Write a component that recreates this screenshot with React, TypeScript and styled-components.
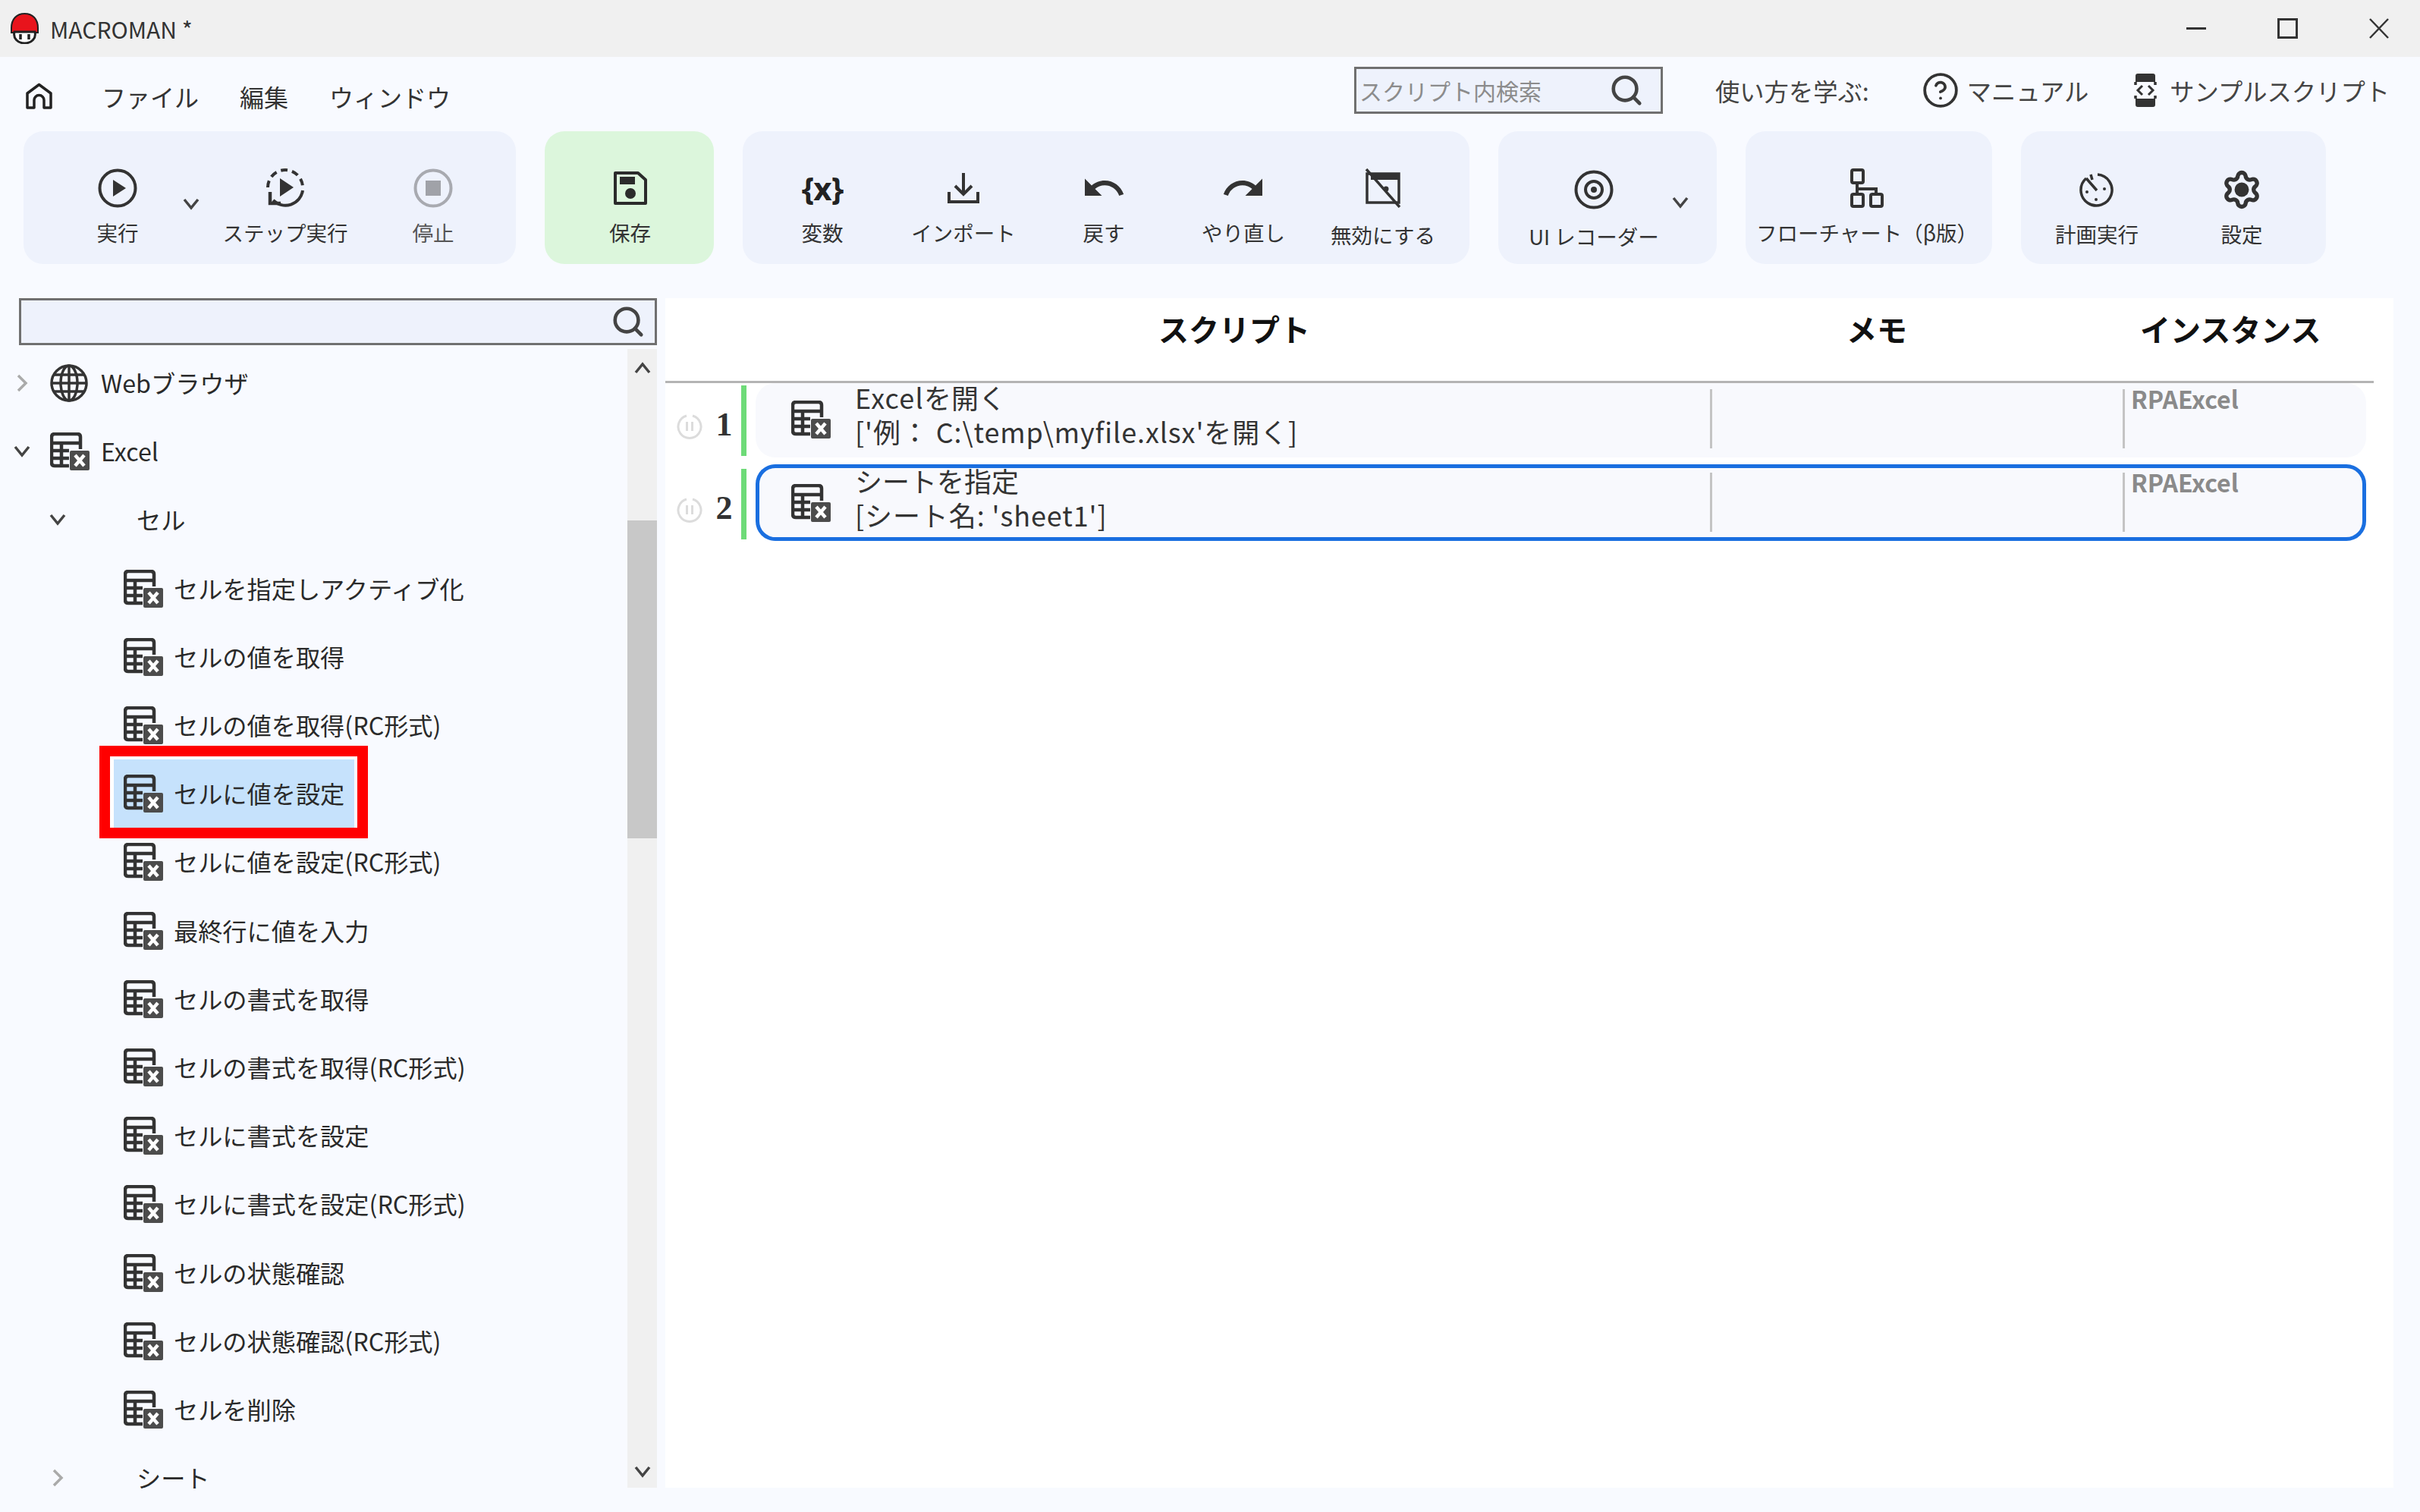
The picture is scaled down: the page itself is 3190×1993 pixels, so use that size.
import React from 'react';
import styled, { createGlobalStyle } from 'styled-components';
import { CircleHelp, Search, Settings } from 'lucide-react';
import { MdRedo, MdUndo } from 'react-icons/md';

const FONT = '"Noto Sans CJK JP", "Noto Sans", sans-serif';
const INK = '#333';

const GlobalStyle = createGlobalStyle`
  html, body {
    margin: 0;
    width: 3190px;
    height: 1993px;
    overflow: hidden;
    background: #f8faff;
  }
  * { box-sizing: border-box; }
`;

const ExcelIcon = () => (
  <svg width="52" height="50" viewBox="0 0 52 50" fill="none">
    <path d="M25 44 H6 Q2 44 2 40 V6 Q2 2 6 2 H36 Q40 2 40 6 V22" stroke={INK} strokeWidth="4.5" />
    <path d="M2 14 H40 M2 24 H25 M2 34 H25 M15 14 V44" stroke={INK} strokeWidth="4.5" />
    <rect x="26" y="24" width="26" height="26" rx="2" fill="#4c4c4c" />
    <path d="M33 30 L45 44 M45 30 L33 44" stroke="#fff" strokeWidth="4.5" />
  </svg>
);

const GlobeIcon = () => (
  <svg width="50" height="50" viewBox="0 0 50 50" fill="none" stroke={INK} strokeWidth="3.5">
    <circle cx="25" cy="25" r="23" />
    <ellipse cx="25" cy="25" rx="11" ry="23" />
    <path d="M25 2 V48 M2 25 H48 M5 14 H45 M5 36 H45" />
  </svg>
);

const HomeIcon = () => (
  <svg width="37" height="36" viewBox="0 0 37 36" fill="none" stroke="#222" strokeWidth="3.5" strokeLinejoin="round">
    <path d="M3 33 V14 L18.5 2.5 L34 14 V33 H25 V23 a6.5 6.5 0 0 0 -13 0 V33 Z" />
  </svg>
);

const RunIcon = () => (
  <svg width="52" height="52" viewBox="0 0 52 52" fill="none">
    <circle cx="26" cy="26" r="23.5" stroke={INK} strokeWidth="4" />
    <path d="M20 15 L37 26 L20 37 Z" fill={INK} />
  </svg>
);

const StepIcon = () => (
  <svg width="56" height="56" viewBox="0 0 56 56" fill="none" stroke={INK} strokeWidth="4">
    <path d="M5 27 A23 23 0 0 1 51 27" strokeDasharray="9 6" />
    <path d="M51 31 A23 23 0 0 1 12 44" />
    <path d="M8 33 L8 48 L22 48" strokeWidth="4.5" />
    <path d="M21 15 L39 27 L21 39 Z" fill={INK} stroke="none" />
  </svg>
);

const StopIcon = () => (
  <svg width="52" height="52" viewBox="0 0 52 52" fill="none">
    <circle cx="26" cy="26" r="23.5" stroke="#a8aab0" strokeWidth="4" />
    <rect x="16" y="16" width="20" height="20" fill="#a0a2a8" />
  </svg>
);

const SaveIcon = () => (
  <svg width="46" height="46" viewBox="0 0 46 46" fill="none">
    <path d="M3 3 H33 L43 12 V43 H3 Z" stroke="#2b2b2b" strokeWidth="4" strokeLinejoin="round" />
    <rect x="9" y="8" width="20" height="10" fill="#2b2b2b" />
    <circle cx="23" cy="30" r="7" fill="#2b2b2b" />
  </svg>
);

const ImportIcon = () => (
  <svg width="42" height="42" viewBox="0 0 42 42" fill="none" stroke={INK} strokeWidth="4">
    <path d="M21 1 V28 M10 18 L21 29 L32 18" />
    <path d="M2 26 V39 H40 V26" />
  </svg>
);

const DisableIcon = () => (
  <svg width="52" height="52" viewBox="0 0 52 52" fill="none">
    <rect x="5" y="7" width="42" height="38" stroke={INK} strokeWidth="3.5" />
    <rect x="10" y="7" width="37" height="8" fill={INK} />
    <circle cx="30" cy="27" r="3.5" fill={INK} />
    <path d="M4 1 L48 51" stroke={INK} strokeWidth="3.5" />
  </svg>
);

const RecordIcon = () => (
  <svg width="52" height="52" viewBox="0 0 52 52" fill="none" stroke={INK} strokeWidth="4">
    <circle cx="26" cy="26" r="23.5" />
    <circle cx="26" cy="26" r="11" />
    <circle cx="26" cy="26" r="4" fill={INK} stroke="none" />
  </svg>
);

const FlowIcon = () => (
  <svg width="48" height="52" viewBox="0 0 48 52" fill="none" stroke={INK} strokeWidth="4">
    <rect x="4" y="2" width="15" height="17" rx="2" />
    <rect x="4" y="34" width="15" height="16" rx="2" />
    <rect x="29" y="34" width="15" height="16" rx="2" />
    <path d="M11 19 V34 M11 27 H36 V34" />
  </svg>
);

const ScheduleIcon = () => (
  <svg width="46" height="46" viewBox="0 0 46 46" fill="none" stroke={INK} strokeWidth="3.5">
    <path d="M24 3 A20.5 20.5 0 1 1 9 8" />
    <path d="M9 8 L23 24 M15 3 L17 10" />
    <circle cx="33" cy="22" r="2" fill={INK} stroke="none" />
    <circle cx="10" cy="26" r="2" fill={INK} stroke="none" />
    <circle cx="22" cy="36" r="2" fill={INK} stroke="none" />
  </svg>
);

const SampleIcon = () => (
  <svg width="30" height="46" viewBox="0 0 30 46" fill="none">
    <path d="M2 12 V4 Q2 1 5 1 H25 Q28 1 28 4 V12 Z" fill={INK} />
    <path d="M2 34 V42 Q2 45 5 45 H25 Q28 45 28 42 V34 Z" fill={INK} />
    <path d="M2 12 V16 M28 12 V16 M2 30 V34 M28 30 V34" stroke={INK} strokeWidth="3.5" />
    <path d="M11 17 L5 23 L11 29 M19 17 L25 23 L19 29" stroke={INK} strokeWidth="3" />
  </svg>
);

const PauseIcon = () => (
  <svg width="34" height="34" viewBox="0 0 34 34" fill="none" stroke="#dcdcdc" strokeWidth="3">
    <path d="M13 3 A15 15 0 1 0 21 3" />
    <path d="M13.5 11 V23 M20.5 11 V23" />
  </svg>
);

const Logo = () => (
  <svg width="39" height="41" viewBox="0 0 39 41">
    <path d="M2 20 C2 8 9 1 19.5 1 C30 1 37 8 37 20 V26 H2 Z" fill="#e8141c" stroke="#222" strokeWidth="2" />
    <path d="M6 25 H33 C35 33 29 40 19.5 40 C10 40 4 33 6 25 Z" fill="#fff" stroke="#222" strokeWidth="3" />
    <path d="M14 28 V35 M25 28 V35" stroke="#222" strokeWidth="3.5" />
  </svg>
);

const Caret = ({ dir, muted }: { dir: 'up' | 'down' | 'right'; muted?: boolean }) => {
  const color = muted ? '#aaa' : '#444';
  if (dir === 'right') {
    return (
      <svg width="16" height="24" viewBox="0 0 16 24" fill="none" stroke={color} strokeWidth="3.5">
        <path d="M3 2 L13 12 L3 22" />
      </svg>
    );
  }
  return (
    <svg width="22" height="16" viewBox="0 0 22 16" fill="none" stroke={color} strokeWidth="3.5">
      <path d={dir === 'down' ? 'M2 2 L11 13 L20 2' : 'M2 14 L11 3 L20 14'} />
    </svg>
  );
};

const TitleBar = styled.header`
  height: 75px;
  background: #f0f0f0;
  display: flex;
  align-items: center;
  padding-left: 13px;
`;

const AppTitle = styled.span`
  margin-left: 14px;
  font: 30px ${FONT};
  color: #333;
`;

const WindowButtons = styled.div`
  margin-left: auto;
  display: flex;
  align-items: center;
  padding-right: 41px;
  gap: 94px;
`;

const MenuRow = styled.div`
  height: 98px;
  display: flex;
  padding: 13px 40px 0 33px;
`;

const MenuLeft = styled.nav`
  display: flex;
  align-items: center;
  height: 78px;
`;

const MenuItem = styled.span<{ $gap: number }>`
  margin-left: ${p => p.$gap}px;
  font: 32px ${FONT};
  color: #333;
`;

const MenuRight = styled.div`
  margin-left: auto;
  display: flex;
  align-items: center;
  height: 62px;
`;

const SearchBox = styled.div<{ $width: number; $pad: number }>`
  width: ${p => p.$width}px;
  height: 62px;
  flex: none;
  border: 3px solid #707070;
  background: #eef2fc;
  display: flex;
  align-items: center;
  justify-content: space-between;
  padding: 0 ${p => p.$pad}px 0 4px;
  font: 30px ${FONT};
  color: #8c8c8c;
`;

const LearnLabel = styled.span`
  margin-left: 69px;
  font: 32.3px ${FONT};
  color: #444;
`;

const HelpLink = styled.span<{ $gap: number; $inner: number }>`
  display: flex;
  align-items: center;
  gap: ${p => p.$inner}px;
  margin-left: ${p => p.$gap}px;
  font: 32.3px ${FONT};
  color: #444;
`;

const Toolbar = styled.div`
  display: flex;
  gap: 38px;
  padding-left: 31px;
  height: 175px;
`;

const Group = styled.div<{ $width: number; $inset?: number; $save?: boolean }>`
  width: ${p => p.$width}px;
  height: 175px;
  flex: none;
  display: flex;
  padding-left: ${p => p.$inset ?? 0}px;
  padding-top: 47px;
  border-radius: 26px;
  background: ${p => (p.$save ? '#dcf6dc' : '#eef2fc')};
`;

const Tool = styled.div<{ $width: number; $lowered?: boolean }>`
  width: ${p => p.$width}px;
  flex: none;
  display: flex;
  flex-direction: column;
  align-items: center;
  padding-top: ${p => (p.$lowered ? 2 : 0)}px;
`;

const ToolIcon = styled.div`
  height: 56px;
  display: flex;
  align-items: center;
  justify-content: center;
  color: ${INK};
`;

const ToolLabel = styled.span<{ $drop?: number; $muted?: boolean }>`
  margin-top: ${p => 10 + (p.$drop ?? 0)}px;
  font: 27.5px/40px ${FONT};
  color: ${p => (p.$muted ? '#555' : '#333')};
  white-space: nowrap;
`;

const VarGlyph = styled.span`
  font: 700 42px/50px "Noto Sans", sans-serif;
  letter-spacing: -1px;
  color: #222;
`;

const GearIcon = styled(Settings)`
  color: ${INK};
  circle { fill: ${INK}; }
`;

const ToolCaret = styled.div<{ $width: number; $top: number }>`
  width: ${p => p.$width}px;
  flex: none;
  display: flex;
  justify-content: center;
  padding-top: ${p => p.$top}px;
`;

const Main = styled.main`
  display: flex;
  margin-top: 45px;
  height: 1568px;
`;

const Sidebar = styled.aside`
  width: 877px;
  flex: none;
  padding: 0 11px 0 25px;
`;

const TreeArea = styled.div`
  display: flex;
  height: 1501px;
  margin: 5px 0 0 -25px;
`;

const Tree = styled.ul`
  flex: 1;
  margin: 0;
  padding: 0;
  list-style: none;
`;

const TreeRow = styled.li<{ $level: number }>`
  height: 90.2px;
  display: flex;
  align-items: center;
  padding-left: ${p => [14, 61, 150][p.$level]}px;
  font: 32.2px ${FONT};
  color: #2a2a2a;
`;

const TreeText = styled.span`
  position: relative;
  top: -1px;
`;

const CaretSlot = styled.span`
  width: 30px;
  flex: none;
  display: flex;
  justify-content: center;
`;

const NodeIcon = styled.span`
  width: 54px;
  flex: none;
  display: flex;
  margin-left: 22px;
  margin-right: 13px;
`;

const GroupName = styled.span`
  margin-left: 89px;
`;

const Leaf = styled.span<{ $selected?: boolean }>`
  position: relative;
  height: 90px;
  display: flex;
  align-items: center;
  gap: 14px;
  padding: 0 13px;
  background: ${p => (p.$selected ? '#c6e2fc' : 'transparent')};
`;

const RedFrame = styled.span`
  position: absolute;
  left: -19px;
  right: -18px;
  top: -18px;
  bottom: -14px;
  border: 14px solid #f00;
  box-shadow: inset 5px 4px 0 #fff;
  pointer-events: none;
`;

const ScrollTrack = styled.div`
  width: 39px;
  flex: none;
  background: #f0f0f0;
  display: flex;
  flex-direction: column;
  align-items: center;
`;

const ScrollArrow = styled.div`
  height: 50px;
  flex: none;
  display: flex;
  align-items: center;
  justify-content: center;
  &:last-child { padding-top: 8px; }
`;

const ScrollThumb = styled.div`
  width: 100%;
  height: 419px;
  flex: none;
  margin-top: 176px;
  margin-bottom: auto;
  background: #c8c8c8;
`;

const ScriptPanel = styled.section`
  width: 2278px;
  height: 1568px;
  flex: none;
  background: #fff;
`;

const ScriptHeader = styled.div`
  width: 2252px;
  height: 112px;
  display: grid;
  grid-template-columns: 1500px 194px 558px;
  border-bottom: 3px solid #b4b4b4;
  padding-bottom: 29px;
  align-items: center;
  text-align: center;
  font: 700 40px ${FONT};
  color: #111;
`;

const InstanceHeading = styled.span`
  justify-self: start;
  margin-left: 250px;
`;

const ScriptRow = styled.div`
  height: 100px;
  margin-bottom: 10px;
  display: flex;
  align-items: flex-start;
  padding-left: 15px;
`;

const PauseSlot = styled.div`
  width: 34px;
  flex: none;
  padding-top: 40px;
  display: flex;
`;

const LineNumber = styled.div`
  width: 51px;
  flex: none;
  padding: 0 0 0 6px;
  text-align: center;
  font: 700 44px/110px "Liberation Serif", serif;
  color: #333;
`;

const StatusBar = styled.div`
  width: 7px;
  height: 93px;
  margin-top: 3px;
  flex: none;
  background: #6edb78;
`;

const ScriptCard = styled.div<{ $selected?: boolean }>`
  width: 2123px;
  margin-left: 12px;
  flex: none;
  height: ${p => (p.$selected ? 101 : 98)}px;
  margin-top: ${p => (p.$selected ? -3 : 0)}px;
  padding-top: ${p => (p.$selected ? 3 : 0)}px;
  border-radius: 26px;
  background: #f8f9fd;
  box-shadow: ${p => (p.$selected ? 'inset 0 0 0 5px #1a6fe0' : 'none')};
  display: grid;
  grid-template-columns: 1258px 544px 1fr;
`;

const CommandCell = styled.div`
  display: flex;
  align-items: flex-start;
  padding-left: 47px;
`;

const CommandIcon = styled.div`
  margin-top: 23px;
  margin-right: 32px;
  display: flex;
`;

const CommandText = styled.div`
  margin-top: -4px;
  font: 36px/45px ${FONT};
  color: #333;
`;

const CommandTitle = styled.div``;

const CommandDetail = styled.div`
  letter-spacing: 0.9px;
`;

const LatinWord = styled.span`
  letter-spacing: 1.2px;
`;

const ColumnCell = styled.div`
  position: relative;
  padding-left: 11px;
  font: 700 32px/41px ${FONT};
  color: #8a8a8a;
  &::before {
    content: '';
    position: absolute;
    left: 0;
    top: 8px;
    width: 3px;
    height: 78px;
    background: #c4c4c4;
  }
`;

const leaves = [
  'セルを指定しアクティブ化',
  'セルの値を取得',
  'セルの値を取得(RC形式)',
  'セルに値を設定',
  'セルに値を設定(RC形式)',
  '最終行に値を入力',
  'セルの書式を取得',
  'セルの書式を取得(RC形式)',
  'セルに書式を設定',
  'セルに書式を設定(RC形式)',
  'セルの状態確認',
  'セルの状態確認(RC形式)',
  'セルを削除',
];

const commands = [
  {
    no: 1,
    title: (
      <>
        <LatinWord>Excel</LatinWord>を開く
      </>
    ),
    detail: "['例： C:\\temp\\myfile.xlsx'を開く]",
  },
  { no: 2, title: 'シートを指定', detail: "[シート名: 'sheet1']", selected: true },
];

const App = () => (
  <>
    <GlobalStyle />
    <TitleBar>
      <Logo />
      <AppTitle>MACROMAN *</AppTitle>
      <WindowButtons>
        <svg width="26" height="4" viewBox="0 0 26 4"><rect width="26" height="3" fill="#333" /></svg>
        <svg width="27" height="27" viewBox="0 0 27 27" fill="none" stroke="#333" strokeWidth="3"><rect x="1.5" y="1.5" width="24" height="24" /></svg>
        <svg width="26" height="27" viewBox="0 0 26 27" fill="none" stroke="#333" strokeWidth="2.5"><path d="M1 1 L25 26 M25 1 L1 26" /></svg>
      </WindowButtons>
    </TitleBar>

    <MenuRow>
      <MenuLeft>
        <HomeIcon />
        <MenuItem $gap={64}>ファイル</MenuItem>
        <MenuItem $gap={54}>編集</MenuItem>
        <MenuItem $gap={54}>ウィンドウ</MenuItem>
      </MenuLeft>
      <MenuRight>
        <SearchBox $width={407} $pad={22}>
          スクリプト内検索
          <Search size={46} strokeWidth={2.4} color="#444" />
        </SearchBox>
        <LearnLabel>使い方を学ぶ:</LearnLabel>
        <HelpLink $gap={69} $inner={10}>
          <CircleHelp size={50} strokeWidth={1.8} color="#333" />
          マニュアル
        </HelpLink>
        <HelpLink $gap={60} $inner={17}>
          <SampleIcon />
          サンプルスクリプト
        </HelpLink>
      </MenuRight>
    </MenuRow>

    <Toolbar>
      <Group $width={649} $inset={64}>
        <Tool $width={120}>
          <ToolIcon><RunIcon /></ToolIcon>
          <ToolLabel>実行</ToolLabel>
        </Tool>
        <ToolCaret $width={74} $top={41}><Caret dir="down" /></ToolCaret>
        <Tool $width={174}>
          <ToolIcon><StepIcon /></ToolIcon>
          <ToolLabel>ステップ実行</ToolLabel>
        </Tool>
        <Tool $width={216}>
          <ToolIcon><StopIcon /></ToolIcon>
          <ToolLabel $muted>停止</ToolLabel>
        </Tool>
      </Group>
      <Group $width={223} $save>
        <Tool $width={225}>
          <ToolIcon><SaveIcon /></ToolIcon>
          <ToolLabel>保存</ToolLabel>
        </Tool>
      </Group>
      <Group $width={958} $inset={12}>
        <Tool $width={186}>
          <ToolIcon><VarGlyph>{'{x}'}</VarGlyph></ToolIcon>
          <ToolLabel>変数</ToolLabel>
        </Tool>
        <Tool $width={186}>
          <ToolIcon><ImportIcon /></ToolIcon>
          <ToolLabel>インポート</ToolLabel>
        </Tool>
        <Tool $width={184}>
          <ToolIcon><MdUndo size={60} /></ToolIcon>
          <ToolLabel>戻す</ToolLabel>
        </Tool>
        <Tool $width={184}>
          <ToolIcon><MdRedo size={60} /></ToolIcon>
          <ToolLabel>やり直し</ToolLabel>
        </Tool>
        <Tool $width={184}>
          <ToolIcon><DisableIcon /></ToolIcon>
          <ToolLabel $drop={3}>無効にする</ToolLabel>
        </Tool>
      </Group>
      <Group $width={288} $inset={26}>
        <Tool $width={200} $lowered>
          <ToolIcon><RecordIcon /></ToolIcon>
          <ToolLabel $drop={3}>UI レコーダー</ToolLabel>
        </Tool>
        <ToolCaret $width={28} $top={39}><Caret dir="down" /></ToolCaret>
      </Group>
      <Group $width={325}>
        <Tool $width={320}>
          <ToolIcon><FlowIcon /></ToolIcon>
          <ToolLabel>フローチャート（β版）</ToolLabel>
        </Tool>
      </Group>
      <Group $width={402}>
        <Tool $width={200} $lowered>
          <ToolIcon><ScheduleIcon /></ToolIcon>
          <ToolLabel>計画実行</ToolLabel>
        </Tool>
        <Tool $width={182} $lowered>
          <ToolIcon><GearIcon size={54} strokeWidth={2.4} /></ToolIcon>
          <ToolLabel>設定</ToolLabel>
        </Tool>
      </Group>
    </Toolbar>

    <Main>
      <Sidebar>
        <SearchBox $width={841} $pad={12}>
          <span />
          <Search size={46} strokeWidth={2.4} color="#444" />
        </SearchBox>
        <TreeArea>
          <Tree>
            <TreeRow $level={0}>
              <CaretSlot><Caret dir="right" muted /></CaretSlot>
              <NodeIcon><GlobeIcon /></NodeIcon>
              <TreeText>Webブラウザ</TreeText>
            </TreeRow>
            <TreeRow $level={0}>
              <CaretSlot><Caret dir="down" /></CaretSlot>
              <NodeIcon><ExcelIcon /></NodeIcon>
              <TreeText>Excel</TreeText>
            </TreeRow>
            <TreeRow $level={1}>
              <CaretSlot><Caret dir="down" /></CaretSlot>
              <GroupName><TreeText>セル</TreeText></GroupName>
            </TreeRow>
            {leaves.map(name => {
              const selected = name === 'セルに値を設定';
              return (
                <TreeRow key={name} $level={2}>
                  <Leaf $selected={selected}>
                    <ExcelIcon />
                    <TreeText>{name}</TreeText>
                    {selected && <RedFrame />}
                  </Leaf>
                </TreeRow>
              );
            })}
            <TreeRow $level={1}>
              <CaretSlot><Caret dir="right" muted /></CaretSlot>
              <GroupName><TreeText>シート</TreeText></GroupName>
            </TreeRow>
          </Tree>
          <ScrollTrack>
            <ScrollArrow><Caret dir="up" /></ScrollArrow>
            <ScrollThumb />
            <ScrollArrow><Caret dir="down" /></ScrollArrow>
          </ScrollTrack>
        </TreeArea>
      </Sidebar>

      <ScriptPanel>
        <ScriptHeader>
          <span>スクリプト</span>
          <span>メモ</span>
          <InstanceHeading>インスタンス</InstanceHeading>
        </ScriptHeader>
        {commands.map(c => (
          <ScriptRow key={c.no}>
            <PauseSlot><PauseIcon /></PauseSlot>
            <LineNumber>{c.no}</LineNumber>
            <StatusBar />
            <ScriptCard $selected={c.selected}>
              <CommandCell>
                <CommandIcon><ExcelIcon /></CommandIcon>
                <CommandText>
                  <CommandTitle>{c.title}</CommandTitle>
                  <CommandDetail>{c.detail}</CommandDetail>
                </CommandText>
              </CommandCell>
              <ColumnCell />
              <ColumnCell>RPAExcel</ColumnCell>
            </ScriptCard>
          </ScriptRow>
        ))}
      </ScriptPanel>
    </Main>
  </>
);

export default App;
